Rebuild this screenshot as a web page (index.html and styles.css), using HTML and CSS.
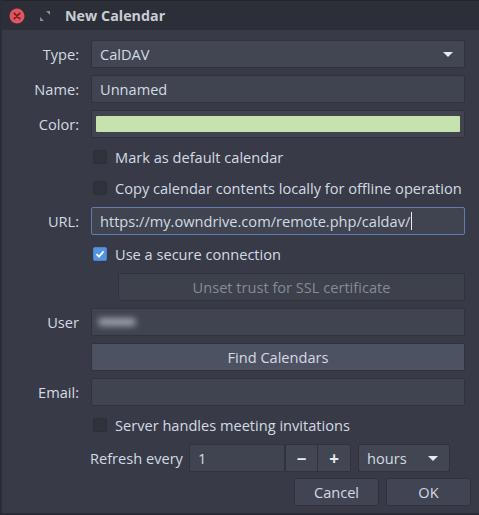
FILE: index.html
```html
<!DOCTYPE html>
<html>
<head>
<meta charset="utf-8">
<link rel="stylesheet" href="styles.css">
</head>
<body>
<div class="window">
  <div class="titlebar">
    <span class="close-btn">
      <svg width="16" height="16" viewBox="0 0 16 16"><circle cx="8" cy="8" r="7.5" fill="#e2555f"/><path d="M5.3 5.3 L10.7 10.7 M10.7 5.3 L5.3 10.7" stroke="#7a1f27" stroke-width="1.8" stroke-linecap="round"/></svg>
    </span>
    <span class="pin-btn">
      <svg width="12" height="12" viewBox="0 0 12 12"><path d="M7 1 H11 V5 Z" fill="#9aa0ab"/><path d="M1 7 V11 H5 Z" fill="#9aa0ab"/></svg>
    </span>
    <span class="title">New Calendar</span>
  </div>
  <div class="content">
    <div class="form">
      <label class="lbl">Type:</label>
      <div class="combo"><span>CalDAV</span><span class="arrow"></span></div>

      <label class="lbl">Name:</label>
      <div class="field">Unnamed</div>

      <label class="lbl">Color:</label>
      <div class="field color-field"><div class="swatch"></div></div>

      <span></span>
      <div class="check-row"><span class="box"></span><span>Mark as default calendar</span></div>

      <span></span>
      <div class="check-row"><span class="box"></span><span>Copy calendar contents locally for offline operation</span></div>

      <label class="lbl">URL:</label>
      <div class="field focus">https://my.owndrive.com/remote.php/caldav/<span class="caret"></span></div>

      <span></span>
      <div class="check-row"><span class="box checked"><svg width="10" height="10" viewBox="0 0 10 10"><path d="M1.5 5.2 L4 7.6 L8.6 2.3" fill="none" stroke="#fff" stroke-width="1.8"/></svg></span><span>Use a secure connection</span></div>

      <span></span>
      <div class="btn disabled unset">Unset trust for SSL certificate</div>

      <label class="lbl">User</label>
      <div class="field"><span class="blur"></span></div>

      <span></span>
      <div class="btn find">Find Calendars</div>

      <label class="lbl">Email:</label>
      <div class="field"></div>

      <span></span>
      <div class="check-row"><span class="box"></span><span>Server handles meeting invitations</span></div>

      <span></span>
      <div class="refresh-row">
        <span class="refresh-lbl">Refresh every</span>
        <div class="spin">
          <div class="spin-val">1</div>
          <div class="spin-btn">&minus;</div>
          <div class="spin-btn">+</div>
        </div>
        <div class="combo hours"><span>hours</span><span class="arrow"></span></div>
      </div>
    </div>
    <div class="actions">
      <div class="btn act">Cancel</div>
      <div class="btn act">OK</div>
    </div>
  </div>
</div>
</body>
</html>
```

FILE: styles.css
```css
html, body {
  margin: 0;
  padding: 0;
  background: #2a2d34;
}
body {
  font-family: "Open Sans", "DejaVu Sans", sans-serif;
  font-size: 14.6px;
  color: #d3dae3;
}
.window {
  width: 479px;
  height: 515px;
  background: #383b47;
  box-sizing: border-box;
  border-left: 2px solid #2a2d35;
  border-bottom: 2px solid #2a2d35;
  overflow: hidden;
}
.titlebar {
  height: 30px;
  background: #2c2f37;
  border-top: 1px solid #23252b;
  box-sizing: border-box;
  display: flex;
  align-items: center;
  padding-left: 7px;
}
.close-btn { display: flex; width: 16px; height: 16px; }
.pin-btn { display: flex; margin-left: 14px; opacity: 0.85; }
.title {
  margin-left: 14px;
  font-weight: bold;
  font-size: 14.3px;
  color: #c8cdd5;
}
.content {
  padding-top: 10px;
}
.form {
  display: grid;
  grid-template-columns: 77px 374px;
  column-gap: 12px;
  row-gap: 7px;
  align-items: center;
}
.lbl {
  text-align: right;
  color: #d3dae3;
}
.field, .combo {
  height: 28px;
  box-sizing: border-box;
  background: #404450;
  border: 1px solid #30333c;
  border-radius: 2px;
  display: flex;
  align-items: center;
  padding-left: 8px;
  color: #d3dae3;
  white-space: nowrap;
}
.combo {
  background: #424653;
  justify-content: space-between;
  padding-right: 11px;
}
.arrow {
  width: 0;
  height: 0;
  border-left: 5px solid transparent;
  border-right: 5px solid transparent;
  border-top: 5px solid #e6e9ee;
}
.color-field {
  padding: 5px 4px 5px 4px;
}
.swatch {
  flex: 1;
  height: 100%;
  background: #c7e3ad;
  border-radius: 1px;
}
.focus {
  border-color: #5e7fae;
}
.caret {
  display: inline-block;
  width: 1px;
  height: 18px;
  background: #e6e9ee;
  margin-left: 1px;
}
.check-row {
  height: 24px;
  display: flex;
  align-items: center;
  padding-left: 2px;
  white-space: nowrap;
}
.box {
  width: 14px;
  height: 14px;
  box-sizing: border-box;
  background: #30333c;
  border: 1px solid #2c2f37;
  border-radius: 2px;
  margin-right: 8px;
  display: flex;
  align-items: center;
  justify-content: center;
  flex: none;
}
.box.checked {
  background: #5294e2;
  border-color: #4a85cc;
}
.btn {
  height: 28px;
  box-sizing: border-box;
  border: 1px solid #30333c;
  border-radius: 2px;
  background: #444957;
  display: flex;
  align-items: center;
  justify-content: center;
}
.unset {
  margin-left: 27px;
  background: #3d414c;
  color: #868b96;
}
.find {
  background: #4d5262;
}
.blur {
  width: 38px;
  height: 8px;
  border-radius: 4px;
  background: #9a9fa8;
  filter: blur(3px);
  margin-left: -2px;
}
.refresh-row {
  display: flex;
  align-items: center;
  height: 28px;
}
.refresh-lbl {
  width: 99px;
  margin-left: -1px;
  white-space: nowrap;
}
.spin {
  display: flex;
  height: 28px;
}
.spin-val {
  width: 96px;
  box-sizing: border-box;
  background: #404450;
  border: 1px solid #30333c;
  border-radius: 2px 0 0 2px;
  display: flex;
  align-items: center;
  padding-left: 8px;
}
.spin-btn {
  width: 33px;
  box-sizing: border-box;
  background: #424653;
  border: 1px solid #30333c;
  display: flex;
  align-items: center;
  justify-content: center;
  font-size: 17px;
  font-weight: bold;
  color: #e6e9ee;
}
.spin-btn + .spin-btn { border-left: none; border-radius: 0 2px 2px 0; }
.hours {
  width: 92px;
  margin-left: 7px;
}
.actions {
  display: flex;
  justify-content: flex-end;
  gap: 7px;
  margin-top: 6px;
  padding-right: 8px;
}
.act {
  width: 85px;
  background: #414553;
}
```
